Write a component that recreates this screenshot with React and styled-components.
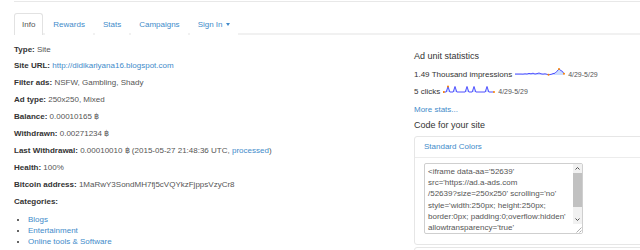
import React from "react";
import styled, { createGlobalStyle } from "styled-components";

const GlobalStyle = createGlobalStyle`
  html, body {
    margin: 0;
    padding: 0;
    overflow: hidden;
    background: #fff;
  }
  body {
    font-family: "Liberation Sans", Arial, sans-serif;
    font-size: 8px;
    color: #555;
  }
  a {
    color: #428bca;
    text-decoration: none;
  }
`;

const Page = styled.div`
  width: 1000px;
  padding: 1px 0 0 14px;
`;

const TopRule = styled.div`
  border-top: 1px solid #e8e8e8;
`;

const Tabs = styled.ul`
  display: flex;
  list-style: none;
  margin: 11px 0 0;
  padding: 0;
  border-bottom: 2px solid #f1f1f1;
`;

const Tab = styled.li`
  margin: 0 2px -2px 0;
  padding: 0 7px;
  line-height: 21px;
  border: 1px solid ${(p) => (p.$active ? "#e2e2e2" : "transparent")};
  border-bottom: none;
  border-radius: 3px 3px 0 0;
  background: #fff;
  color: ${(p) => (p.$active ? "#555" : "#428bca")};
`;

const Caret = styled.span`
  display: inline-block;
  margin-left: 3px;
  vertical-align: middle;
  border-top: 3px solid #428bca;
  border-left: 2.5px solid transparent;
  border-right: 2.5px solid transparent;
`;

const Main = styled.div`
  display: flex;
  margin-top: 6.5px;
`;

const InfoColumn = styled.div`
  width: 400px;
`;

const Row = styled.div`
  line-height: 16.9px;
  white-space: nowrap;
`;

const Label = styled.b`
  font-weight: bold;
  color: #333;
`;

const Categories = styled.ul`
  margin: 3px 0 0;
  padding-left: 14px;
  line-height: 11px;
  color: #333;
`;

const SideColumn = styled.div`
  width: 320px;
  color: #333;
`;

const Heading = styled.h4`
  margin: ${(p) => p.$top}px 0 0;
  font-size: 9px;
  font-weight: normal;
  line-height: 13px;
  color: #333;
`;

const StatLine = styled.div`
  display: flex;
  align-items: center;
  height: 17px;
  margin-top: ${(p) => p.$top || 0}px;
`;

const Range = styled.span`
  font-size: 7px;
  color: #555;
`;

const Spark = styled.svg`
  display: block;
  margin: 0 3px;
`;

const Panel = styled.div`
  margin-top: ${(p) => p.$top}px;
  border: 1px solid #e6e6e6;
  border-radius: 3px;
  background: #fff;
  min-height: 20px;
`;

const PanelHeading = styled.div`
  padding-left: 9px;
  line-height: 20px;
  border-bottom: 1px solid #ececec;
  color: #428bca;
`;

const PanelBody = styled.div`
  padding: 5px 9px 10px;
`;

const CodeBox = styled.div`
  display: flex;
  box-sizing: border-box;
  width: 159px;
  height: 71px;
  border: 1px solid #cfcfcf;
  border-radius: 2px;
  overflow: hidden;
`;

const CodeText = styled.div`
  flex: 1;
  padding: 2px 1px 0 3px;
  font-size: 8px;
  line-height: 11.2px;
  color: #555;
  white-space: pre-wrap;
  overflow: hidden;
`;

const ScrollBar = styled.div`
  display: flex;
  flex-direction: column;
  width: 9px;
`;

const ScrollButton = styled.div`
  display: flex;
  align-items: center;
  justify-content: center;
  height: 9px;
  background: #f1f1f1;
`;

const ScrollTrack = styled.div`
  flex: 1;
  background: #f1f1f1;
`;

const ScrollThumb = styled.div`
  height: 34px;
  background: #c1c1c1;
`;

const ScrollCorner = styled.div`
  display: flex;
  align-items: flex-end;
  justify-content: flex-end;
  height: 9px;
  background: #fff;
`;

const code = `<iframe data-aa='52639'
src='https://ad.a-ads.com
/52639?size=250x250' scrolling='no'
style='width:250px; height:250px;
border:0px; padding:0;overflow:hidden'
allowtransparency='true'`;

function ImpressionsSpark() {
  const pts = [
    [0, 6], [2, 6], [4, 6], [6, 6], [8, 6.1], [10, 5.8], [12, 6], [14, 5.4],
    [16, 5.8], [18, 5.2], [20, 6], [22, 5.6], [24, 5], [26, 5.8], [28, 6.1],
    [30, 5.8], [32, 6.3], [33.5, 6.7], [36, 6.4], [38, 5.6], [40, 5.2],
    [42, 3.2], [44, 1], [46, 2.6], [47.5, 3.4], [49, 5.8],
  ];
  const line = pts.map((p) => p.join(",")).join(" ");
  const area = `0,6.9 ${line} 49,6.9`;
  return (
    <Spark width="50" height="12" viewBox="0 0 50 12">
      <polygon points={area} fill="#ccddff" />
      <polyline points={line} fill="none" stroke="#3d3dff" strokeWidth="0.9" />
      <circle cx="33.5" cy="6.7" r="1" fill="#ff8800" />
      <circle cx="44" cy="1" r="1" fill="#ff8800" />
      <circle cx="49" cy="5.8" r="1" fill="#ff8800" />
    </Spark>
  );
}

function ClicksSpark() {
  const peaks = [5, 12, 24, 31, 44];
  const pts = [[0, 7]];
  peaks.forEach((x) => {
    pts.push([x - 1.8, 7], [x, 1.5], [x + 1.8, 7]);
  });
  pts.push([51, 7]);
  const line = pts.map((p) => p.join(",")).join(" ");
  return (
    <Spark width="52" height="12" viewBox="0 0 52 12">
      <polygon points={`0,7 ${line} 51,7`} fill="#ccddff" />
      <polyline points={line} fill="none" stroke="#3d3dff" strokeWidth="0.9" />
      <circle cx="0.8" cy="7" r="1" fill="#ff8800" />
      <circle cx="5" cy="1.5" r="1" fill="#ff8800" />
      <circle cx="51" cy="7" r="1" fill="#ff8800" />
    </Spark>
  );
}

function Chevron({ down }) {
  return (
    <svg width="5" height="3" viewBox="0 0 5 3">
      <polyline
        points={down ? "0.5,0.5 2.5,2.5 4.5,0.5" : "0.5,2.5 2.5,0.5 4.5,2.5"}
        fill="none"
        stroke="#505050"
        strokeWidth="1"
      />
    </svg>
  );
}

function CodeArea({ text }) {
  return (
    <CodeBox>
      <CodeText>{text}</CodeText>
      <ScrollBar>
        <ScrollButton>
          <Chevron />
        </ScrollButton>
        <ScrollTrack>
          <ScrollThumb />
        </ScrollTrack>
        <ScrollButton>
          <Chevron down />
        </ScrollButton>
        <ScrollCorner>
          <svg width="7" height="7" viewBox="0 0 7 7">
            <path d="M6.5 1.5 L1.5 6.5 M6.5 4.5 L4.5 6.5" stroke="#9a9a9a" strokeWidth="0.8" />
          </svg>
        </ScrollCorner>
      </ScrollBar>
    </CodeBox>
  );
}

export default function App() {
  return (
    <Page>
      <GlobalStyle />
      <TopRule />
      <Tabs>
        <Tab $active>Info</Tab>
        <Tab>Rewards</Tab>
        <Tab>Stats</Tab>
        <Tab>Campaigns</Tab>
        <Tab>
          Sign In<Caret />
        </Tab>
      </Tabs>
      <Main>
        <InfoColumn>
          <Row>
            <Label>Type:</Label> Site
          </Row>
          <Row>
            <Label>Site URL:</Label> <a href="#">http://didikariyana16.blogspot.com</a>
          </Row>
          <Row>
            <Label>Filter ads:</Label> NSFW, Gambling, Shady
          </Row>
          <Row>
            <Label>Ad type:</Label> 250x250, Mixed
          </Row>
          <Row>
            <Label>Balance:</Label> 0.00010165 ฿
          </Row>
          <Row>
            <Label>Withdrawn:</Label> 0.00271234 ฿
          </Row>
          <Row>
            <Label>Last Withdrawal:</Label> 0.00010010 ฿ (2015-05-27 21:48:36 UTC,{" "}
            <a href="#">processed</a>)
          </Row>
          <Row>
            <Label>Health:</Label> 100%
          </Row>
          <Row>
            <Label>Bitcoin address:</Label> 1MaRwY3SondMH7fj5cVQYkzFjppsVzyCr8
          </Row>
          <Row>
            <Label>Categories:</Label>
          </Row>
          <Categories>
            <li><a href="#">Blogs</a></li>
            <li><a href="#">Entertainment</a></li>
            <li><a href="#">Online tools &amp; Software</a></li>
          </Categories>
        </InfoColumn>
        <SideColumn>
          <Heading $top={8}>Ad unit statistics</Heading>
          <StatLine $top={3}>
            1.49 Thousand impressions
            <ImpressionsSpark />
            <Range>4/29-5/29</Range>
          </StatLine>
          <StatLine>
            5 clicks
            <ClicksSpark />
            <Range>4/29-5/29</Range>
          </StatLine>
          <StatLine $top={1}>
            <a href="#">More stats...</a>
          </StatLine>
          <Heading $top={1}>Code for your site</Heading>
          <Panel $top={4.5}>
            <PanelHeading>Standard Colors</PanelHeading>
            <PanelBody>
              <CodeArea text={code} />
            </PanelBody>
          </Panel>
          <Panel $top={2} />
        </SideColumn>
      </Main>
    </Page>
  );
}
